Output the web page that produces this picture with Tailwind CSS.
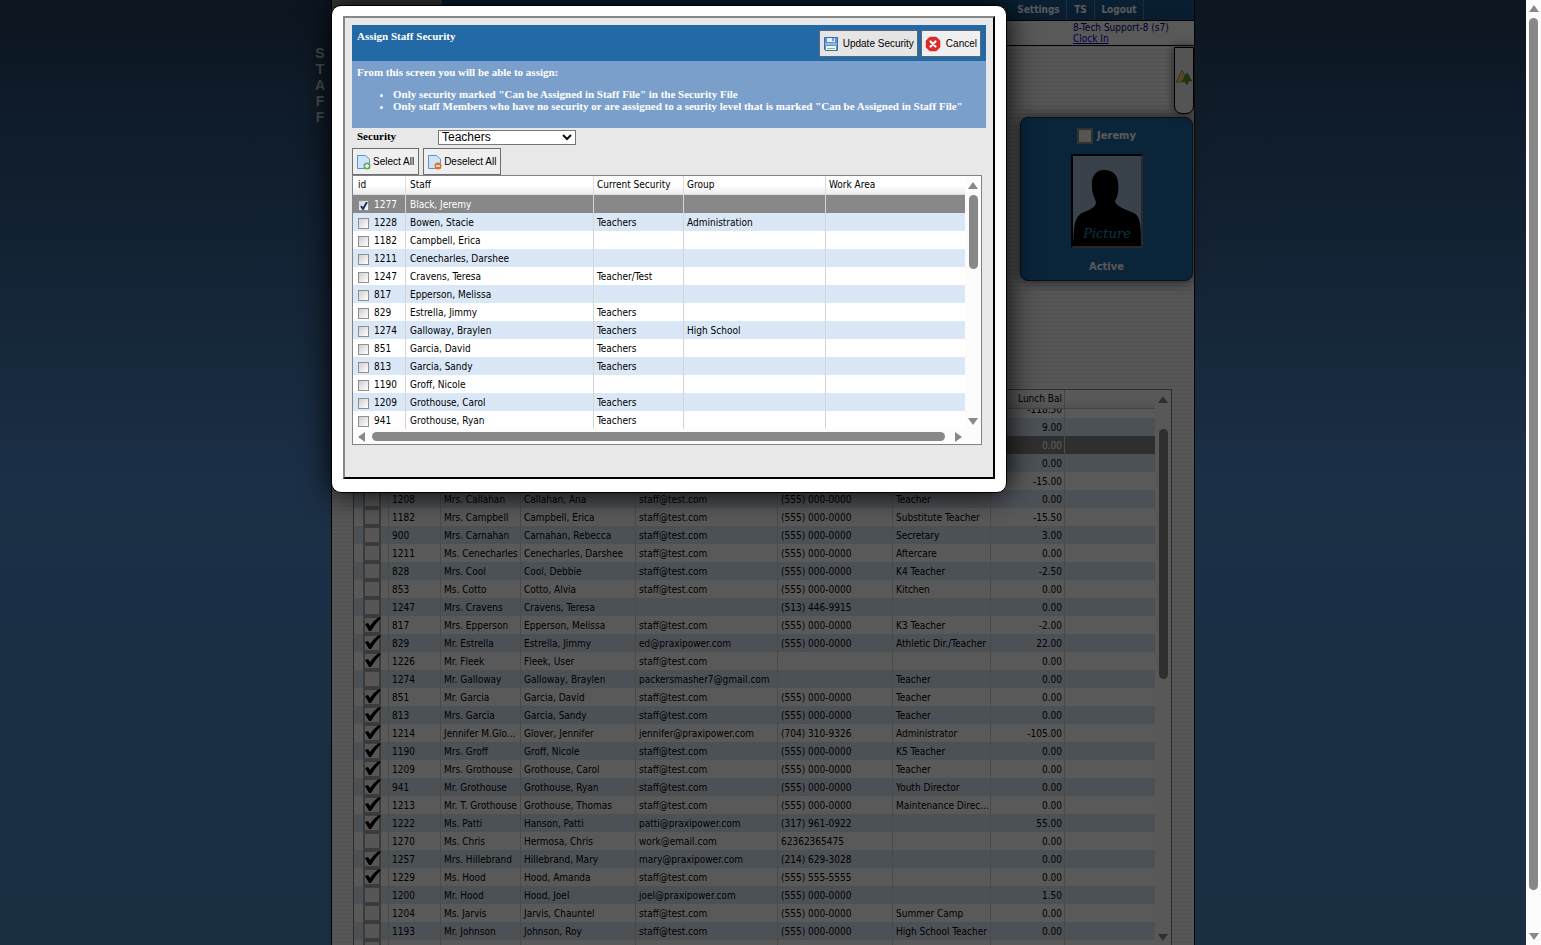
<!DOCTYPE html>
<html lang="en">
<head>
    <meta charset="UTF-8">
    <meta name="viewport" content="width=device-width, initial-scale=1.0">
    <title>Staff - Assign Staff Security</title>
    <script src="https://cdn.jsdelivr.net/npm/@tailwindcss/browser@4"></script>
</head>

<body class="flex h-screen overflow-hidden bg-white font-['DejaVu_Sans_Condensed','Noto_Sans',sans-serif] text-[10px] leading-[12px] text-black">
    <main class="relative flex min-w-0 flex-1 justify-center overflow-hidden bg-linear-to-b from-[#223f5e] via-[#4d86c8] to-[#4a83bd]">
        <div class="relative flex h-full w-[864px] flex-col border-x border-black bg-[repeating-linear-gradient(0deg,#fafafa_0px,#fafafa_2px,#ededed_2px,#ededed_4px)]">
            <div class="absolute right-full top-[45px] mr-[7px] flex flex-col items-center font-['Liberation_Sans',sans-serif] text-[14px] leading-[16px] font-bold text-[#d8dde4]">
                <span>S</span><span>T</span><span>A</span><span>F</span><span>F</span>
            </div>

            <!-- Top navigation -->
            <nav class="flex h-[21px] shrink-0 border-b border-black bg-linear-to-b from-[#1b5d95] to-[#17507f] text-[10px] leading-[20px] font-bold text-white">
                <div class="w-[110px] bg-[#a8a8a8]"></div>
                <div class="ml-auto mr-[50px] flex">
                    <a href="#" class="w-[56px] border-r border-[#3f7fb4] text-center">Settings</a>
                    <a href="#" class="w-[28px] border-r border-[#3f7fb4] text-center">TS</a>
                    <a href="#" class="w-[49px] border-r border-[#3f7fb4] text-center">Logout</a>
                </div>
            </nav>
            <div class="flex h-[25px] shrink-0 justify-end border-b border-black bg-white">
                <div class="w-[121px] pt-px leading-[11px] text-[#000080]">
                    <p>8-Tech Support-8 (s7)</p>
                    <a href="#" class="text-[#0000c8] underline">Clock In</a>
                </div>
            </div>

            <div class="absolute right-0 top-[47px] flex h-[67px] w-5 items-center justify-center rounded-b-lg border border-black bg-[#efefef] shadow-[0_0_10px_#555]">
                <svg class="mb-2 h-4 w-4" viewBox="0 0 16 16">
                    <path d="M6 1 L12 13 H0 Z" fill="#e8d27a" stroke="#b39b45"/>
                    <path d="M11 4 L14 8 H13 L16 12 H12 V15 H10 V12 H6 L9 8 H8 Z" fill="#5c9a2c" stroke="#3a6b18" stroke-width=".5"/>
                </svg>
            </div>

            <!-- Staff card -->
            <section class="mt-[71px] mr-px flex h-[164px] w-[173px] shrink-0 flex-col items-center self-end rounded-lg border border-[#0c2f4d] bg-[#1e67a5] pt-[9px] text-[11px] leading-[18px] font-bold text-white shadow-[0_0_14px_#444]">
                <label class="flex items-center gap-1">
                    <input type="checkbox" class="h-4 w-4 appearance-none border-2 border-[#8c8c8c] bg-[#f4f4f4]">Jeremy
                </label>
                <svg class="mt-[9px] h-[94px] w-[72px] border-2 border-r-[#777] border-b-[#777] border-black bg-[#a3bcd8]" viewBox="0 0 68 90">
                    <path d="M31 14 C22 14 18 21 19 30 C19 39 22 42 23 46 C23 51 17 54 9 57 C2 61 1 68 0 90 H68 C68 72 68 61 61 57 C51 53 43 50 42 45 C45 40 46 33 45 26 C44 18 39 14 31 14 Z" fill="#000"/>
                    <text x="34" y="82" text-anchor="middle" font-family="DejaVu Serif, serif" font-style="italic" font-weight="400" font-size="13" fill="#1b96b8">Picture</text>
                </svg>
                <p class="mt-[10px]">Active</p>
            </section>

            <!-- Staff list -->
            <section class="mt-[108px] mr-[22px] ml-[21px] flex h-[700px] shrink-0 border border-[#808080] bg-[#fbfbfb]">
                <div class="min-w-0 flex-1">
                    <table class="w-full table-fixed border-separate border-spacing-0">
                        <colgroup>
                            <col class="w-[35px]"><col class="w-[52px]"><col class="w-[80px]"><col class="w-[115px]"><col class="w-[142px]"><col class="w-[115px]"><col class="w-[98px]"><col class="w-[74px]"><col>
                        </colgroup>
                        <thead>
                            <tr class="h-[19px] bg-linear-to-b from-white from-40% to-[#e6e6e6]">
                                <th colspan="7" class="border-b border-[#c0c0c0]"></th>
                                <th class="border-r border-b border-[#c0c0c0] p-0 pr-[2px] text-right font-normal">Lunch Bal</th>
                                <th class="border-b border-[#c0c0c0]"></th>
                            </tr>
                        </thead>
                        <tbody id="staff-rows"></tbody>
                    </table>
                </div>
                <div class="flex h-[552px] w-4 shrink-0 flex-col items-center pt-[6px]">
                    <svg class="h-2 w-[10px]" viewBox="0 0 10 8"><path d="M5 0 L10 7 H0 Z" fill="#888"/></svg>
                    <div class="mt-[25px] h-[250px] w-[9px] rounded-full bg-[#888]"></div>
                    <svg class="mt-auto h-2 w-[10px]" viewBox="0 0 10 8"><path d="M5 7 L10 0 H0 Z" fill="#888"/></svg>
                </div>
            </section>
        </div>

        <div class="absolute inset-0 bg-black/65"></div>

        <!-- Assign security dialog -->
        <div class="absolute inset-x-0 top-[5px] mx-auto w-[864px]">
            <div role="dialog" aria-labelledby="dialog-title" class="w-[676px] rounded-[10px] border border-black bg-white pt-[10px] pr-[11px] pb-[13px] pl-[11px] shadow-[0_0_30px_#000]">
                <div class="h-[463px] border-2 border-t-[#868686] border-l-[#868686] border-r-black border-b-black bg-[#e8e8e8] p-[7px]">
                    <header class="flex h-[36px] justify-between bg-[#2369a5] pt-[5px] pr-[5px] pl-[5px]">
                        <h1 id="dialog-title" class="font-['Liberation_Serif',serif] text-[11px] leading-[13px] font-bold text-white">Assign Staff Security</h1>
                        <div class="flex gap-[3px] font-['Liberation_Sans',sans-serif]">
                            <button class="flex h-[27px] items-center gap-1 border border-[#5d6670] bg-[#e5e5e5] px-[3px]">
                                <svg class="h-4 w-4" viewBox="0 0 16 16">
                                    <path d="M1.500 1.500 H14.500 V14.500 H2.500 L1.500 13.500 Z" fill="#5d93d2" stroke="#3a6ab0"/>
                                    <path d="M4 2 H12 V6 H4 Z" fill="#e4effb"/><path d="M9 2 H11 V5 H9 Z" fill="#6b9bd4"/>
                                    <path d="M2 7 H14 V9 H2 Z" fill="#8db8e8"/>
                                    <path d="M3 10 H13 V14 H3 Z" fill="#f4f8ee"/><path d="M4 12 H12 V13 H4 Z" fill="#8bc06a"/>
                                </svg>
                                Update Security
                            </button>
                            <button class="flex h-[27px] items-center gap-[5px] border border-[#5d6670] bg-[#efefef] px-[3px]">
                                <svg class="h-4 w-4" viewBox="0 0 16 16">
                                    <path d="M5 1.500 H11 L14.500 5 V11 L11 14.500 H5 L1.500 11 V5 Z" fill="#dc2b2b" stroke="#dc2b2b" stroke-width="1.500" stroke-linejoin="round"/>
                                    <path d="M5.500 5.500 L10.500 10.500 M10.500 5.500 L5.500 10.500" stroke="#fff" stroke-width="2.200" stroke-linecap="round"/>
                                </svg>
                                Cancel
                            </button>
                        </div>
                    </header>
                    <div class="h-[67px] bg-[#7a9fcb] px-[5px] pt-[5px] font-['Liberation_Serif',serif] text-[11px] leading-[12px] font-bold text-white">
                        <p>From this screen you will be able to assign:</p>
                        <ul class="mt-[10px] list-disc pl-9">
                            <li>Only security marked "Can be Assigned in Staff File" in the Security File</li>
                            <li>Only staff Members who have no security or are assigned to a seurity level that is marked "Can be Assigned in Staff File"</li>
                        </ul>
                    </div>
                    <div class="flex h-5 items-start pt-[2px] pl-[5px]">
                        <label for="security" class="w-[81px] font-['Liberation_Serif',serif] text-[11px] leading-[13px] font-bold">Security</label>
                        <div class="relative">
                            <select id="security" class="block h-[15px] w-[138px] appearance-none border border-[#767676] bg-white pl-[3px] font-['Liberation_Sans',sans-serif] text-[12px] leading-[13px]">
                                <option>Teachers</option>
                            </select>
                            <svg class="pointer-events-none absolute top-1 right-1 h-[7px] w-[10px]" viewBox="0 0 10 7"><path d="M1 1 L5 5 L9 1" fill="none" stroke="#111" stroke-width="2"/></svg>
                        </div>
                    </div>
                    <div class="flex gap-1 font-['Liberation_Sans',sans-serif]">
                        <button class="flex h-[27px] items-center gap-px border border-[#6e6e6e] bg-[#efefef] pr-1 pl-[3px]">
                            <svg class="h-4 w-4" viewBox="0 0 16 16">
                                <path d="M1.500 1.500 H9.500 L13.500 5 V14.500 H1.500 Z" fill="#cfe4f8" stroke="#5b93cf"/>
                                <circle cx="11" cy="12" r="3.500" fill="#5fae5a"/><path d="M11 10 V14 M9 12 H13" stroke="#fff" stroke-width="1.300"/>
                            </svg>
                            Select All
                        </button>
                        <button class="flex h-[27px] items-center gap-px border border-[#6e6e6e] bg-[#efefef] pr-1 pl-[3px]">
                            <svg class="h-4 w-4" viewBox="0 0 16 16">
                                <path d="M1.500 1.500 H9.500 L13.500 5 V14.500 H1.500 Z" fill="#cfe4f8" stroke="#5b93cf"/>
                                <circle cx="11" cy="12" r="3.500" fill="#e0702a"/><path d="M9 12 H13" stroke="#fff" stroke-width="1.300"/>
                            </svg>
                            Deselect All
                        </button>
                    </div>

                    <div class="mr-1 h-[270px] border border-[#808489] bg-[#fcfcfc]">
                        <div class="flex h-[253px] overflow-hidden">
                            <div class="min-w-0 flex-1">
                                <table class="w-full table-fixed border-separate border-spacing-0 bg-white">
                                    <colgroup>
                                        <col class="w-[53px]"><col class="w-[188px]"><col class="w-[90px]"><col class="w-[142px]"><col>
                                    </colgroup>
                                    <thead>
                                        <tr class="h-[19px] bg-linear-to-b from-white from-50% to-[#e9e9ec] text-left">
                                            <th class="border-r border-b border-[#dcdcdc] p-0 pl-[5px] font-normal">id</th>
                                            <th class="border-r border-b border-[#dcdcdc] p-0 pl-1 font-normal">Staff</th>
                                            <th class="border-r border-b border-[#dcdcdc] p-0 pl-[3px] font-normal">Current Security</th>
                                            <th class="border-r border-b border-[#dcdcdc] p-0 pl-[3px] font-normal">Group</th>
                                            <th class="border-b border-[#dcdcdc] p-0 pl-[3px] font-normal">Work Area</th>
                                        </tr>
                                    </thead>
                                    <tbody id="security-rows"></tbody>
                                </table>
                            </div>
                            <div class="flex w-4 shrink-0 flex-col items-center pt-[6px] pb-[3px]">
                                <svg class="h-2 w-[10px]" viewBox="0 0 10 8"><path d="M5 0 L10 7 H0 Z" fill="#888"/></svg>
                                <div class="mt-[5px] h-[74px] w-[9px] rounded-full bg-[#888]"></div>
                                <svg class="mt-auto h-2 w-[10px]" viewBox="0 0 10 8"><path d="M5 7 L10 0 H0 Z" fill="#888"/></svg>
                            </div>
                        </div>
                        <div class="flex h-[15px] items-center pr-[19px] pl-[5px]">
                            <svg class="h-[10px] w-2" viewBox="0 0 8 10"><path d="M0 5 L7 0 V10 Z" fill="#888"/></svg>
                            <div class="mr-[9px] ml-[6px] h-[9px] flex-1 rounded-full bg-[#888]"></div>
                            <svg class="h-[10px] w-2" viewBox="0 0 8 10"><path d="M8 5 L1 0 V10 Z" fill="#888"/></svg>
                        </div>
                    </div>
                </div>
            </div>
        </div>
    </main>

    <!-- Page scrollbar -->
    <div class="flex w-[15px] shrink-0 flex-col items-center bg-[#fcfcfc] pt-[5px] pb-1">
        <svg class="h-2 w-[10px]" viewBox="0 0 10 8"><path d="M5 0 L10 7 H0 Z" fill="#888"/></svg>
        <div class="mt-[5px] h-[872px] w-[9px] rounded-full bg-[#888]"></div>
        <svg class="mt-auto h-2 w-[10px]" viewBox="0 0 10 8"><path d="M5 7 L10 0 H0 Z" fill="#888"/></svg>
    </div>

    <script>
        // id, staff, current security, group
        const securityRows = [
            ['1277', 'Black, Jeremy', '', ''],
            ['1228', 'Bowen, Stacie', 'Teachers', 'Administration'],
            ['1182', 'Campbell, Erica', '', ''],
            ['1211', 'Cenecharles, Darshee', '', ''],
            ['1247', 'Cravens, Teresa', 'Teacher/Test', ''],
            ['817', 'Epperson, Melissa', '', ''],
            ['829', 'Estrella, Jimmy', 'Teachers', ''],
            ['1274', 'Galloway, Braylen', 'Teachers', 'High School'],
            ['851', 'Garcia, David', 'Teachers', ''],
            ['813', 'Garcia, Sandy', 'Teachers', ''],
            ['1190', 'Groff, Nicole', '', ''],
            ['1209', 'Grothouse, Carol', 'Teachers', ''],
            ['941', 'Grothouse, Ryan', 'Teachers', '']
        ];

        // checked, id, title, name, email, phone, position, lunch balance
        const staffRows = [
            [0, '', '', '', '', '', '', '9.00'],
            [0, '', '', '', '', '', '', '0.00'],
            [0, '', '', '', '', '', '', '0.00'],
            [0, '', '', '', '', '', '', '-15.00'],
            [0, '1208', 'Mrs. Callahan', 'Callahan, Ana', 'staff@test.com', '(555) 000-0000', 'Teacher', '0.00'],
            [0, '1182', 'Mrs. Campbell', 'Campbell, Erica', 'staff@test.com', '(555) 000-0000', 'Substitute Teacher', '-15.50'],
            [0, '900', 'Mrs. Carnahan', 'Carnahan, Rebecca', 'staff@test.com', '(555) 000-0000', 'Secretary', '3.00'],
            [0, '1211', 'Ms. Cenecharles', 'Cenecharles, Darshee', 'staff@test.com', '(555) 000-0000', 'Aftercare', '0.00'],
            [0, '828', 'Mrs. Cool', 'Cool, Debbie', 'staff@test.com', '(555) 000-0000', 'K4 Teacher', '-2.50'],
            [0, '853', 'Ms. Cotto', 'Cotto, Alvia', 'staff@test.com', '(555) 000-0000', 'Kitchen', '0.00'],
            [0, '1247', 'Mrs. Cravens', 'Cravens, Teresa', '', '(513) 446-9915', '', '0.00'],
            [1, '817', 'Mrs. Epperson', 'Epperson, Melissa', 'staff@test.com', '(555) 000-0000', 'K3 Teacher', '-2.00'],
            [1, '829', 'Mr. Estrella', 'Estrella, Jimmy', 'ed@praxipower.com', '(555) 000-0000', 'Athletic Dir./Teacher', '22.00'],
            [1, '1226', 'Mr. Fleek', 'Fleek, User', 'staff@test.com', '', '', '0.00'],
            [0, '1274', 'Mr. Galloway', 'Galloway, Braylen', 'packersmasher7@gmail.com', '', 'Teacher', '0.00'],
            [1, '851', 'Mr. Garcia', 'Garcia, David', 'staff@test.com', '(555) 000-0000', 'Teacher', '0.00'],
            [1, '813', 'Mrs. Garcia', 'Garcia, Sandy', 'staff@test.com', '(555) 000-0000', 'Teacher', '0.00'],
            [1, '1214', 'Jennifer M.Glo...', 'Glover, Jennifer', 'jennifer@praxipower.com', '(704) 310-9326', 'Administrator', '-105.00'],
            [1, '1190', 'Mrs. Groff', 'Groff, Nicole', 'staff@test.com', '(555) 000-0000', 'K5 Teacher', '0.00'],
            [1, '1209', 'Mrs. Grothouse', 'Grothouse, Carol', 'staff@test.com', '(555) 000-0000', 'Teacher', '0.00'],
            [1, '941', 'Mr. Grothouse', 'Grothouse, Ryan', 'staff@test.com', '(555) 000-0000', 'Youth Director', '0.00'],
            [1, '1213', 'Mr. T. Grothouse', 'Grothouse, Thomas', 'staff@test.com', '(555) 000-0000', 'Maintenance Direc...', '0.00'],
            [1, '1222', 'Ms. Patti', 'Hanson, Patti', 'patti@praxipower.com', '(317) 961-0922', '', '55.00'],
            [0, '1270', 'Ms. Chris', 'Hermosa, Chris', 'work@email.com', '62362365475', '', '0.00'],
            [1, '1257', 'Mrs. Hillebrand', 'Hillebrand, Mary', 'mary@praxipower.com', '(214) 629-3028', '', '0.00'],
            [1, '1229', 'Ms. Hood', 'Hood, Amanda', 'staff@test.com', '(555) 555-5555', '', '0.00'],
            [0, '1200', 'Mr. Hood', 'Hood, Joel', 'joel@praxipower.com', '(555) 000-0000', '', '1.50'],
            [0, '1204', 'Ms. Jarvis', 'Jarvis, Chauntel', 'staff@test.com', '(555) 000-0000', 'Summer Camp', '0.00'],
            [0, '1193', 'Mr. Johnson', 'Johnson, Roy', 'staff@test.com', '(555) 000-0000', 'High School Teacher', '0.00'],
            [0, '', '', '', '', '', '', '']
        ];

        const cell = text => `<td class="border-r border-[#d5d5d5] p-0 pt-[2px] pl-[3px] whitespace-nowrap">${text}</td>`;

        document.getElementById('security-rows').innerHTML = securityRows.map((row, i) => {
            const look = i === 0 ? 'bg-[#888888] text-white' : i % 2 ? 'bg-[#dae7f6]' : 'bg-white';
            const tick = i === 0 ? '<svg class="pointer-events-none absolute top-[2px] left-[2px] h-[8px] w-[8px]" viewBox="0 0 8 8"><path d="M1 4 L3 7 L7 0" fill="none" stroke="#1d2f6f" stroke-width="2"/></svg>' : '';
            return `<tr class="h-[18px] ${look}">
                <td class="border-r border-[#d5d5d5] p-0 pt-[2px] pl-[5px]">
                    <label class="flex items-center gap-[5px]">
                        <span class="relative mt-px flex"><input type="checkbox" ${i === 0 ? 'checked' : ''} class="h-[11px] w-[11px] appearance-none border border-[#8f8f8f] bg-linear-to-br from-[#cfcfcf] to-white">${tick}</span>
                        ${row[0]}
                    </label>
                </td>
                <td class="border-r border-[#d5d5d5] p-0 pt-[2px] pl-1">${row[1]}</td>
                ${row.slice(2).map(cell).join('')}<td></td>
            </tr>`;
        }).join('');

        // First line is half scrolled under the header
        const clippedRow = `<tr class="h-[9px] bg-white">
            <td colspan="7" class="p-0"></td>
            <td class="border-r border-[#d5d5d5] p-0 pr-[2px]"><div class="flex h-[9px] items-end justify-end overflow-hidden"><span class="leading-[16px]">-118.50</span></div></td>
            <td class="p-0"></td>
        </tr>`;

        document.getElementById('staff-rows').innerHTML = clippedRow + staffRows.map((row, i) => {
            const look = i === 1 ? 'bg-[#888888] text-white' : i % 2 ? 'bg-white' : 'bg-[#dae7f6]';
            const tick = row[0] ? '<svg class="pointer-events-none absolute inset-0 h-[18px] w-[18px]" viewBox="0 0 18 18"><path d="M2 8 L5 7 L7 10 Q11 4 16 1 L18 2 Q12 8 8 15 L6 15 Z" fill="#000"/></svg>' : '';
            return `<tr class="h-[18px] ${look}">
                <td class="border-r border-[#d5d5d5] p-0 pl-[9px]">
                    <span class="relative flex h-[18px]"><input type="checkbox" aria-label="Select ${row[3]}" ${row[0] ? 'checked' : ''} class="h-[18px] w-[18px] appearance-none border-2 border-[#a8a8a8] bg-[#f5f5f5]">${tick}</span>
                </td>
                ${row.slice(1, 7).map(cell).join('')}
                <td class="border-r border-[#d5d5d5] p-0 pt-[2px] pr-[2px] text-right">${row[7]}</td><td></td>
            </tr>`;
        }).join('');
    </script>
</body>
</html>
